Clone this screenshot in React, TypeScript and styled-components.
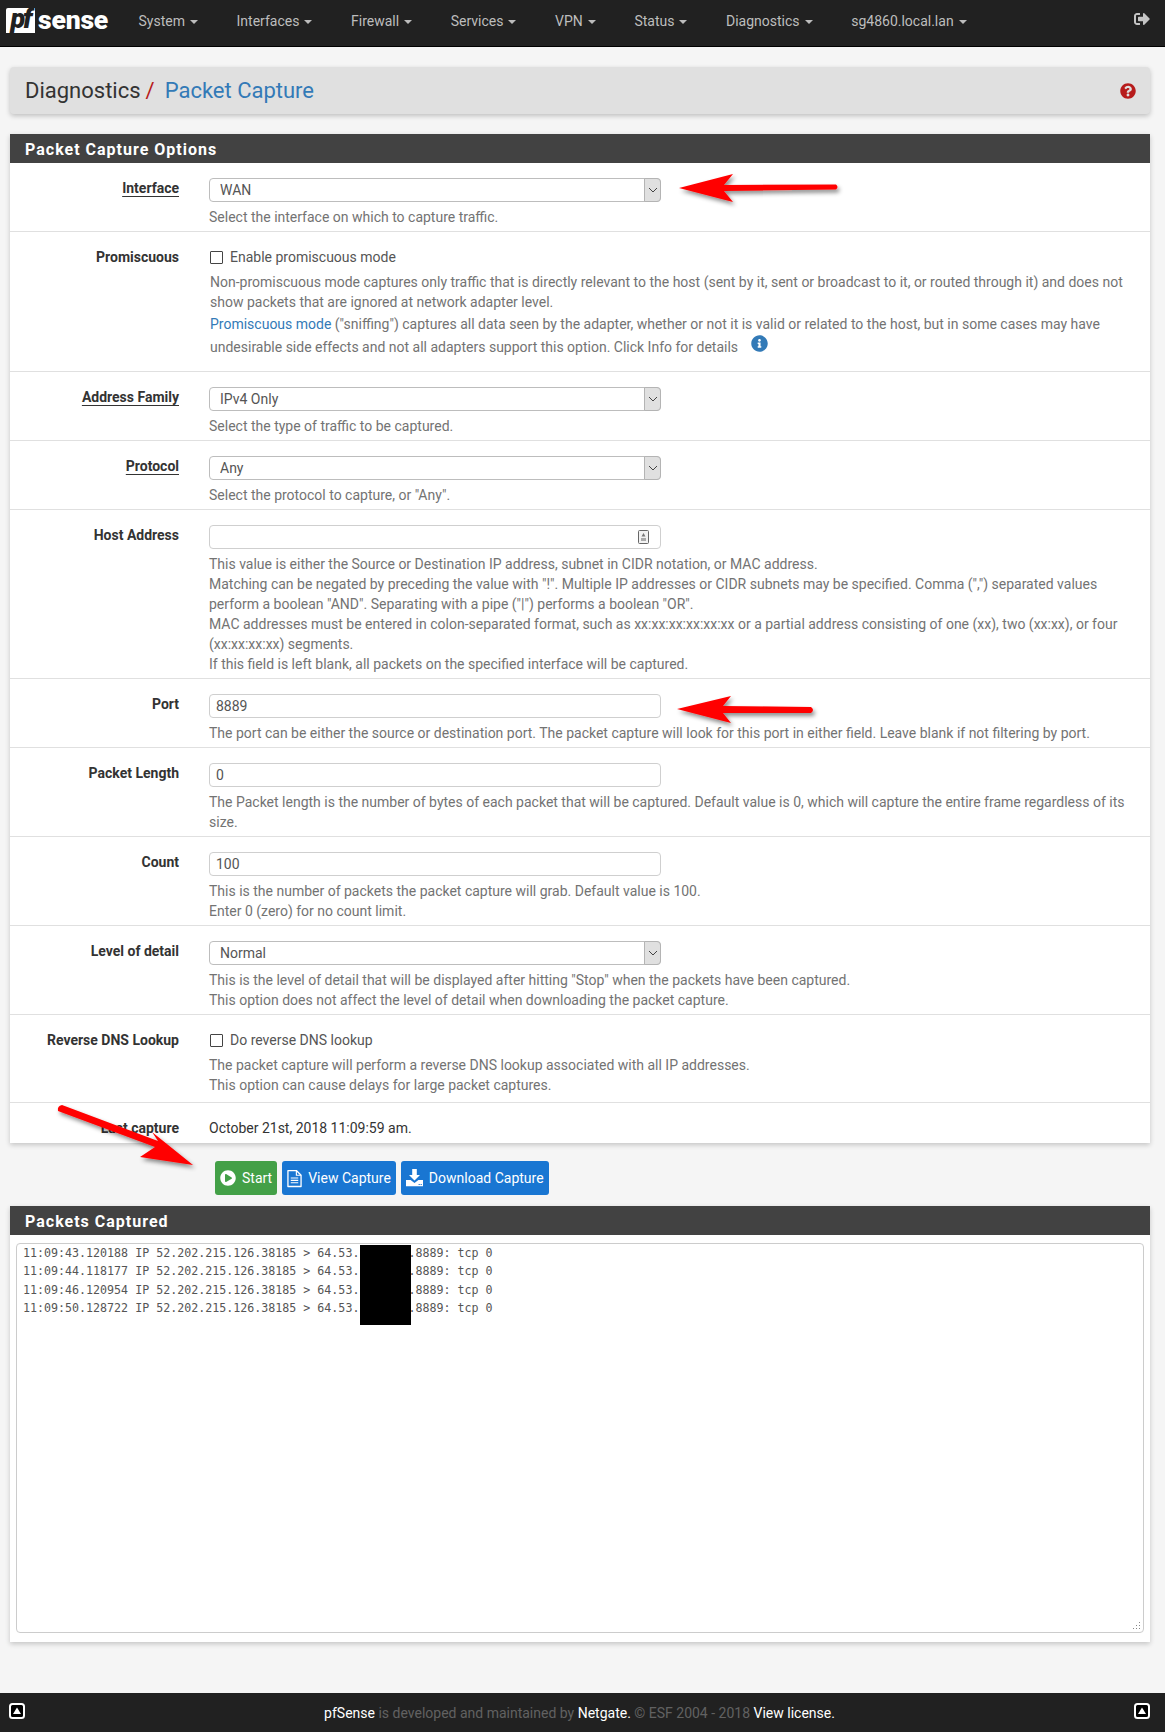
import React from "react";
import styled, { createGlobalStyle } from "styled-components";
import { FaInfoCircle, FaPlayCircle, FaQuestionCircle, FaSignOutAlt } from "react-icons/fa";

const Global = createGlobalStyle`
  html, body { margin: 0; padding: 0; background: #f5f5f5; }
  body { font-family: Roboto, "Liberation Sans", sans-serif; font-size: 14px; line-height: 20px; color: #737373; }
  * { box-sizing: border-box; }
`;

const Page = styled.div`
  position: relative;
  width: 1165px;
  height: 1732px;
  display: flex;
  flex-direction: column;
`;

const Navbar = styled.header`
  height: 47px;
  flex: none;
  display: flex;
  align-items: flex-start;
  background: #212121;
  border-bottom: 1px solid #000;
  padding-left: 6px;
`;

const Logo = styled.div`
  width: 113.2px;
  flex: none;
  display: flex;
  align-items: flex-start;
  padding-top: 8px;
`;

const LogoBox = styled.span`
  width: 29px;
  height: 25px;
  background: #fff;
  border-radius: 2px 0 0 0;
  color: #212121;
  font: italic 900 27px/23px Roboto, sans-serif;
  letter-spacing: -2px;
  text-align: center;
`;

const LogoWord = styled.span`
  margin-left: 3px;
  color: #fff;
  font: 900 26.5px/24px Roboto, sans-serif;
  letter-spacing: -0.2px;
`;

const NavItem = styled.a`
  padding: 11px 19.3px 0;
  white-space: nowrap;
  color: #bdbdbd;
  font-size: 14px;
  line-height: 20px;
`;

const Caret = styled.span`
  display: inline-block;
  margin-left: 5px;
  vertical-align: middle;
  border-top: 4px solid #bdbdbd;
  border-left: 4px solid transparent;
  border-right: 4px solid transparent;
`;

const NavEnd = styled.div`
  margin-left: auto;
  padding: 11px 15px 0 0;
  color: #c4c4c4;
  line-height: 0;
`;

const Main = styled.main`
  flex: 1;
  padding: 20px 15px 0 10px;
`;

const Crumb = styled.div`
  height: 47px;
  display: flex;
  align-items: center;
  justify-content: space-between;
  padding: 0 14px 0 15px;
  background: #e0e0e0;
  border-radius: 4px;
  box-shadow: 0 2px 5px rgba(0, 0, 0, 0.22);
`;

const CrumbTitle = styled.h1`
  margin: 0;
  font-size: 22px;
  font-weight: 400;
  line-height: 28px;
  color: #333;
`;

const Slash = styled.span`
  color: #b71c1c;
  margin: 0 10px 0 5px;
`;

const CrumbLink = styled.a`
  color: #337ab7;
`;

const HelpIcon = styled.span`
  color: #b71c1c;
  line-height: 0;
`;

const Panel = styled.section<{ $top: number }>`
  margin-top: ${(p) => p.$top}px;
  background: #fff;
  box-shadow: 0 2px 5px rgba(0, 0, 0, 0.2);
`;

const PanelHead = styled.h2`
  margin: 0;
  height: 29px;
  padding: 5.5px 15px 0;
  background: #424242;
  color: #fff;
  font-size: 16px;
  font-weight: 700;
  line-height: 20px;
  letter-spacing: 1px;
`;

const Row = styled.div<{ $bottom?: number; $last?: boolean }>`
  display: grid;
  grid-template-columns: 169px 941px;
  column-gap: 30px;
  padding: 15px 0 ${(p) => p.$bottom ?? 4}px;
  border-bottom: ${(p) => (p.$last ? "0" : "1px solid #e0e0e0")};
`;

const Label = styled.div`
  text-align: right;
  font-weight: 700;
  color: #333;
  line-height: 20px;
`;

const Required = styled.span`
  text-decoration: underline;
  text-decoration-thickness: 1px;
  text-underline-offset: 3px;
`;

const FieldWrap = styled.div`
  position: relative;
  width: 452px;
  height: 24px;
`;

const Select = styled.select`
  display: block;
  width: 100%;
  height: 24px;
  border: 1px solid #bdbdbd;
  border-radius: 4px;
  background: #fff;
  color: #555;
  font: 14px/20px Roboto, sans-serif;
  outline: none;
  appearance: none;
  padding: 0 0 0 10px;
`;

const SelectArrow = styled.span`
  position: absolute;
  top: 0;
  right: 0;
  width: 17px;
  height: 24px;
  display: flex;
  align-items: center;
  justify-content: center;
  background: #e0e0e0;
  border: 1px solid #b4b4b4;
  border-radius: 0 4px 4px 0;
  pointer-events: none;
`;

const Input = styled.input`
  display: block;
  width: 100%;
  height: 24px;
  border: 1px solid #cfcfcf;
  border-radius: 4px;
  background: #fff;
  color: #555;
  font: 14px/20px Roboto, sans-serif;
  outline: none;
  padding: 0 6px;
`;

const FieldIcon = styled.svg`
  position: absolute;
  top: 5px;
  right: 12px;
`;

const Help = styled.div<{ $indent?: boolean }>`
  margin-top: 5px;
  padding-left: ${(p) => (p.$indent ? 1 : 0)}px;
  color: #737373;
  line-height: 20px;
`;

const HelpLoose = styled.div`
  padding-left: 1px;
  color: #737373;
  line-height: 22px;
  margin-top: 1px;
`;

const InfoLink = styled.a`
  color: #337ab7;
`;

const InfoIcon = styled.span`
  display: inline-block;
  margin-left: 13px;
  color: #337ab7;
  line-height: 0;
`;

const CheckLine = styled.label`
  display: flex;
  align-items: center;
  height: 20px;
  padding-left: 1px;
  color: #555;
`;

const CheckBox = styled.span`
  width: 13px;
  height: 13px;
  margin-right: 7px;
  border: 1px solid #444;
  border-radius: 1px;
  background: #fff;
`;

const Value = styled.div`
  color: #333;
  line-height: 20px;
`;

const Actions = styled.div`
  display: flex;
  gap: 5px;
  margin-top: 18px;
  padding-left: 205px;
`;

const Button = styled.button<{ $green?: boolean }>`
  height: 34px;
  display: flex;
  align-items: center;
  gap: 6px;
  padding: 0 5px;
  border: 0;
  border-radius: 3px;
  background: ${(p) => (p.$green ? "#43a047" : "#1976d2")};
  color: #fff;
  font: 14px/20px Roboto, sans-serif;
`;

const LogBody = styled.div`
  position: relative;
  padding: 8px 6px 9px;
`;

const LogArea = styled.textarea`
  display: block;
  width: 100%;
  height: 390px;
  padding: 0 6px;
  border: 1px solid #ccc;
  border-radius: 4px;
  background: #fff;
  color: #555;
  font: 11.65px/18.4px "DejaVu Sans Mono", monospace;
  outline: none;
  resize: none;
  white-space: pre;
`;

const Redaction = styled.span`
  position: absolute;
  left: 350px;
  top: 10px;
  width: 51px;
  height: 80px;
  background: #000;
`;

const Grip = styled.svg`
  position: absolute;
  right: 9px;
  bottom: 11px;
`;

const Footer = styled.footer`
  height: 39px;
  flex: none;
  display: flex;
  align-items: center;
  justify-content: space-between;
  padding: 0 15px 3px 9px;
  background: #212121;
  color: #616161;
  font-size: 14px;
`;

const FooterText = styled.div`
  padding-top: 3px;
`;

const FooterLink = styled.a`
  color: #fff;
`;

const Arrows = styled.svg`
  position: absolute;
  left: 0;
  top: 0;
  pointer-events: none;
`;

const Chevron = () => (
  <svg width="10" height="6" viewBox="0 0 10 6">
    <path d="M1 1l4 4 4-4" fill="none" stroke="#444" strokeWidth="1" />
  </svg>
);

const Drop = () => (
  <SelectArrow>
    <Chevron />
  </SelectArrow>
);

const UpSquare = () => (
  <svg width="16" height="16" viewBox="0 0 16 16">
    <rect x="1" y="1" width="14" height="14" rx="2.5" fill="#000" stroke="#fff" strokeWidth="2" />
    <path d="M8 4.5L12 11H4z" fill="#fff" />
  </svg>
);

const FileIcon = () => (
  <svg width="15" height="19" viewBox="0 0 16 19">
    <path d="M1 1h9l5 5v12H1z" fill="none" stroke="#fff" strokeWidth="1.4" strokeLinejoin="round" />
    <path d="M10 1v5h5" fill="none" stroke="#fff" strokeWidth="1.2" />
    <path d="M4 9h8M4 11.5h8M4 14h8" stroke="#fff" strokeWidth="1.2" />
  </svg>
);

const DownloadIcon = () => (
  <svg width="17" height="18" viewBox="0 0 17 18">
    <path d="M6.2 0h4.6v6h3.2l-5.5 5.6L3 6h3.2z" fill="#fff" />
    <path d="M0 11h4.6l3.9 3 3.9-3H17v6.2H0z" fill="#fff" />
    <path d="M12.6 15h1.2v1h-1.2zM14.6 15h1.2v1h-1.2z" fill="#1976d2" />
  </svg>
);

const LOG = [
  "11:09:43.120188 IP 52.202.215.126.38185 > 64.53.       .8889: tcp 0",
  "11:09:44.118177 IP 52.202.215.126.38185 > 64.53.       .8889: tcp 0",
  "11:09:46.120954 IP 52.202.215.126.38185 > 64.53.       .8889: tcp 0",
  "11:09:50.128722 IP 52.202.215.126.38185 > 64.53.       .8889: tcp 0",
].join("\n");

const NAV = ["System", "Interfaces", "Firewall", "Services", "VPN", "Status", "Diagnostics", "sg4860.local.lan"];

export default function App() {
  return (
    <Page>
      <Global />
      <Navbar>
        <Logo>
          <LogoBox>pf</LogoBox>
          <LogoWord>sense</LogoWord>
        </Logo>
        {NAV.map((n) => (
          <NavItem key={n}>
            {n}
            <Caret />
          </NavItem>
        ))}
        <NavEnd>
          <FaSignOutAlt size={16} />
        </NavEnd>
      </Navbar>
      <Main>
        <Crumb>
          <CrumbTitle>
            Diagnostics<Slash>/</Slash>
            <CrumbLink>Packet Capture</CrumbLink>
          </CrumbTitle>
          <HelpIcon>
            <FaQuestionCircle size={16} />
          </HelpIcon>
        </Crumb>
        <Panel $top={20}>
          <PanelHead>Packet Capture Options</PanelHead>
          <Row>
            <Label>
              <Required>Interface</Required>
            </Label>
            <div>
              <FieldWrap>
                <Select defaultValue="WAN">
                  <option>WAN</option>
                </Select>
                <Drop />
              </FieldWrap>
              <Help>Select the interface on which to capture traffic.</Help>
            </div>
          </Row>
          <Row $bottom={13}>
            <Label>Promiscuous</Label>
            <div>
              <CheckLine>
                <CheckBox />
                Enable promiscuous mode
              </CheckLine>
              <Help $indent>
                Non-promiscuous mode captures only traffic that is directly relevant to the host (sent by it, sent or
                broadcast to it, or routed through it) and does not show packets that are ignored at network adapter
                level.
              </Help>
              <HelpLoose>
                <InfoLink>Promiscuous mode</InfoLink> ("sniffing") captures all data seen by the adapter, whether or
                not it is valid or related to the host, but in some cases may have undesirable side effects and not all
                adapters support this option. Click Info for details
                <InfoIcon>
                  <FaInfoCircle size={17} />
                </InfoIcon>
              </HelpLoose>
            </div>
          </Row>
          <Row>
            <Label>
              <Required>Address Family</Required>
            </Label>
            <div>
              <FieldWrap>
                <Select defaultValue="IPv4 Only">
                  <option>IPv4 Only</option>
                </Select>
                <Drop />
              </FieldWrap>
              <Help>Select the type of traffic to be captured.</Help>
            </div>
          </Row>
          <Row>
            <Label>
              <Required>Protocol</Required>
            </Label>
            <div>
              <FieldWrap>
                <Select defaultValue="Any">
                  <option>Any</option>
                </Select>
                <Drop />
              </FieldWrap>
              <Help>Select the protocol to capture, or "Any".</Help>
            </div>
          </Row>
          <Row>
            <Label>Host Address</Label>
            <div>
              <FieldWrap>
                <Input readOnly />
                <FieldIcon width="11" height="14" viewBox="0 0 11 14">
                  <rect x="0.5" y="0.5" width="10" height="13" rx="1" fill="#f2f2f2" stroke="#666" />
                  <path d="M5.5 3L7.5 6.5H3.5z" fill="#777" />
                  <rect x="3" y="8" width="5" height="3" fill="#aaa" />
                </FieldIcon>
              </FieldWrap>
              <Help>
                This value is either the Source or Destination IP address, subnet in CIDR notation, or MAC address.
                <br />
                Matching can be negated by preceding the value with "!". Multiple IP addresses or CIDR subnets may be
                specified. Comma (",") separated values perform a boolean "AND". Separating with a pipe ("|") performs a
                boolean "OR".
                <br />
                MAC addresses must be entered in colon-separated format, such as xx:xx:xx:xx:xx:xx or a partial address
                consisting of one (xx), two (xx:xx), or four (xx:xx:xx:xx) segments.
                <br />
                If this field is left blank, all packets on the specified interface will be captured.
              </Help>
            </div>
          </Row>
          <Row>
            <Label>Port</Label>
            <div>
              <FieldWrap>
                <Input readOnly value="8889" />
              </FieldWrap>
              <Help>
                The port can be either the source or destination port. The packet capture will look for this port in
                either field. Leave blank if not filtering by port.
              </Help>
            </div>
          </Row>
          <Row>
            <Label>Packet Length</Label>
            <div>
              <FieldWrap>
                <Input readOnly value="0" />
              </FieldWrap>
              <Help>
                The Packet length is the number of bytes of each packet that will be captured. Default value is 0,
                which will capture the entire frame regardless of its size.
              </Help>
            </div>
          </Row>
          <Row>
            <Label>Count</Label>
            <div>
              <FieldWrap>
                <Input readOnly value="100" />
              </FieldWrap>
              <Help>
                This is the number of packets the packet capture will grab. Default value is 100.
                <br />
                Enter 0 (zero) for no count limit.
              </Help>
            </div>
          </Row>
          <Row>
            <Label>Level of detail</Label>
            <div>
              <FieldWrap>
                <Select defaultValue="Normal">
                  <option>Normal</option>
                </Select>
                <Drop />
              </FieldWrap>
              <Help>
                This is the level of detail that will be displayed after hitting "Stop" when the packets have been
                captured.
                <br />
                This option does not affect the level of detail when downloading the packet capture.
              </Help>
            </div>
          </Row>
          <Row $bottom={7}>
            <Label>Reverse DNS Lookup</Label>
            <div>
              <CheckLine>
                <CheckBox />
                Do reverse DNS lookup
              </CheckLine>
              <Help>
                The packet capture will perform a reverse DNS lookup associated with all IP addresses.
                <br />
                This option can cause delays for large packet captures.
              </Help>
            </div>
          </Row>
          <Row $last $bottom={5}>
            <Label>Last capture</Label>
            <Value>October 21st, 2018 11:09:59 am.</Value>
          </Row>
        </Panel>
        <Actions>
          <Button $green>
            <FaPlayCircle size={16} />
            Start
          </Button>
          <Button>
            <FileIcon />
            View Capture
          </Button>
          <Button>
            <DownloadIcon />
            Download Capture
          </Button>
        </Actions>
        <Panel $top={11}>
          <PanelHead>Packets Captured</PanelHead>
          <LogBody>
            <LogArea readOnly value={LOG} />
            <Redaction />
            <Grip width="8" height="9" viewBox="0 0 8 9">
              <path d="M6 0h1v1H6zM6 3h1v1H6zM6 6h1v1H6zM3 3h1v1H3zM3 6h1v1H3zM0 6h1v1H0z" fill="#888" />
            </Grip>
          </LogBody>
        </Panel>
      </Main>
      <Footer>
        <UpSquare />
        <FooterText>
          <FooterLink>pfSense</FooterLink> is developed and maintained by <FooterLink>Netgate.</FooterLink> © ESF 2004 -
          2018 <FooterLink>View license.</FooterLink>
        </FooterText>
        <UpSquare />
      </Footer>
      <Arrows width="1165" height="1732" viewBox="0 0 1165 1732">
        <defs>
          <filter id="sh" x="-20%" y="-50%" width="140%" height="200%">
            <feDropShadow dx="2" dy="3" stdDeviation="2" floodColor="#000" floodOpacity="0.45" />
          </filter>
        </defs>
        <g fill="#f00" filter="url(#sh)">
          <path d="M679 188L733 174L724 185L836 184.5Q839 187 836 189.5L724 191L733 202Z" />
          <path d="M677 709L731 696L723 706L811 707Q815 710 811 713L723 713L731 723Z" />
          <path d="M193 1165L140 1157L155 1147L58 1111Q57 1106 62 1105L158 1141L152 1132Z" />
        </g>
      </Arrows>
    </Page>
  );
}
